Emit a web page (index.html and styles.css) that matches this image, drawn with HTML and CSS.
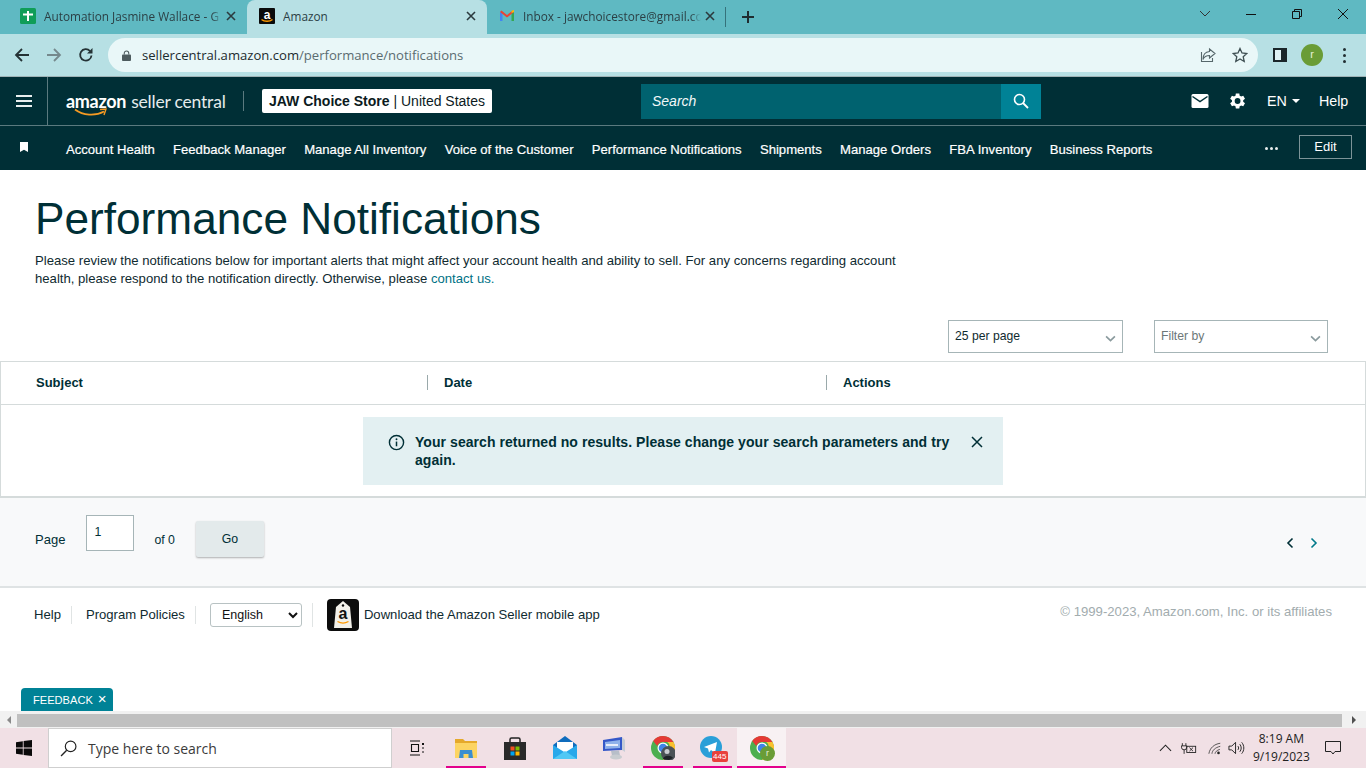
FILE: index.html
```html
<!DOCTYPE html>
<html lang="en">
<head>
  <meta charset="UTF-8" />
  <title>Amazon</title>
  <link rel="stylesheet" href="styles.css">
</head>
<body>
  <div class="tabstrip">
    <div class="tab">
      <svg class="favicon" viewBox="0 0 16 16"><rect width="16" height="16" rx="1.5" fill="#0f9d58"/><path d="M3 6.500h10M8 3v10" stroke="#fff" stroke-width="2" fill="none"/></svg>
      <span class="tab-title">Automation Jasmine Wallace - G</span>
      <svg class="tab-close" viewBox="0 0 10 10"><path d="M1 1l8 8M9 1l-8 8" stroke="#2b3a3e" stroke-width="1.6"/></svg>
    </div>
    <div class="tab tab-active">
      <svg class="favicon" viewBox="0 0 16 16"><rect width="16" height="16" rx="1" fill="#0b0b0b"/><text x="8" y="10.5" text-anchor="middle" font-family="Liberation Sans" font-weight="700" font-size="12" fill="#fff">a</text><path d="M2.5 11.5c3 2.4 8 2.4 11 0" stroke="#f90" stroke-width="1.5" fill="none"/></svg>
      <span class="tab-title">Amazon</span>
      <svg class="tab-close" viewBox="0 0 10 10"><path d="M1 1l8 8M9 1l-8 8" stroke="#2b3a3e" stroke-width="1.6"/></svg>
    </div>
    <div class="tab tab-last">
      <svg class="favicon" viewBox="0 0 16 16"><path d="M1 13V4l2.5 1v8z" fill="#4285f4"/><path d="M15 13V4l-2.5 1v8z" fill="#34a853"/><path d="M1 4l1.5-1.5L8 7l5.5-4.500L15 4 8 9.500z" fill="#ea4335"/><path d="M12.500 5V2.800L15 2v2z" fill="#fbbc04"/></svg>
      <span class="tab-title">Inbox - jawchoicestore@gmail.co</span>
      <svg class="tab-close" viewBox="0 0 10 10"><path d="M1 1l8 8M9 1l-8 8" stroke="#2b3a3e" stroke-width="1.6"/></svg>
    </div>
    <svg class="new-tab" viewBox="0 0 14 14"><path d="M7 1v12M1 7h12" stroke="#1f2d30" stroke-width="2"/></svg>
    <div class="window-controls">
      <svg viewBox="0 0 46 20"><path d="M18 7l5 5 5-5" stroke="#333" fill="none"/></svg>
      <svg viewBox="0 0 46 20"><path d="M18 10.500h10" stroke="#111"/></svg>
      <svg viewBox="0 0 46 20"><path d="M18.500 7.500h7v7h-7zM20.500 7.500v-2h7v7h-2" stroke="#111" fill="none"/></svg>
      <svg viewBox="0 0 46 20"><path d="M18 5l10 10M28 5L18 15" stroke="#111" fill="none"/></svg>
    </div>
  </div>

  <div class="toolbar">
    <svg class="tool" viewBox="0 0 16 16"><path d="M15 8H2M8 2L2 8l6 6" stroke="#243235" stroke-width="1.800" fill="none"/></svg>
    <svg class="tool" viewBox="0 0 16 16"><path d="M1 8h13M8 2l6 6-6 6" stroke="#75898d" stroke-width="1.800" fill="none"/></svg>
    <svg class="tool" viewBox="0 0 16 16"><path d="M13.500 8.500A5.700 5.700 0 1 1 12 4" stroke="#243235" stroke-width="1.800" fill="none"/><path d="M14.500 1v5.500H9z" fill="#243235"/></svg>
    <div class="omnibox">
      <svg class="lock" viewBox="0 0 10 12"><path d="M2.500 5V3.500a2.500 2.500 0 0 1 5 0V5" stroke="#4d5b5e" stroke-width="1.200" fill="none"/><rect y="5" width="10" height="7" rx="1" fill="#4d5b5e"/></svg>
      <span class="url"><span class="url-host">sellercentral.amazon.com</span>/performance/notifications</span>
      <svg class="omni-icon" viewBox="0 0 16 16"><path d="M9.500 2l5.500 4.500-5.500 4.500V8.500C6 8.500 4 10 3 12.500 3 8 5.500 4.800 9.500 4.500z" fill="none" stroke="#56676b" stroke-width="1.100"/><path d="M1.500 5v9.500h11V11" fill="none" stroke="#56676b" stroke-width="1.100"/></svg>
      <svg class="omni-icon" viewBox="0 0 16 16"><path d="M8 1.500l2 4.500 4.800.500-3.600 3.200 1 4.800L8 12l-4.200 2.500 1-4.800L1.200 6.500 6 6z" fill="none" stroke="#3f4f53" stroke-width="1.300"/></svg>
    </div>
    <svg class="side-panel" viewBox="0 0 14 14"><path d="M0 0h14v14H0z" fill="#1a2629"/><path d="M2 2h6v10H2z" fill="#dff2f4"/></svg>
    <div class="avatar">r</div>
    <div class="kebab"><i></i><i></i><i></i></div>
  </div>

  <header class="topbar">
    <button class="burger"><i></i><i></i><i></i></button>
    <a class="logo">
      <span class="logo-word">amazon</span>
      <span class="logo-sub">seller central</span>
      <svg class="logo-smile" viewBox="0 0 34 9"><path d="M1 1.500c8 6 20 7 29 2" stroke="#f59a23" stroke-width="1.800" fill="none"/><path d="M26 1.500l6-.5-2 6" stroke="#f59a23" stroke-width="1.400" fill="none"/></svg>
    </a>
    <div class="store"><b>JAW Choice Store</b> | United States</div>
    <div class="search">
      <span class="search-text">Search</span>
      <div class="search-btn"><svg viewBox="0 0 16 16"><circle cx="6.500" cy="6.500" r="5" stroke="#fff" stroke-width="1.600" fill="none"/><path d="M10 10l5 5" stroke="#fff" stroke-width="1.800"/></svg></div>
    </div>
    <div class="top-right">
      <svg class="mail" viewBox="0 0 17 14"><rect width="17" height="14" rx="1.500" fill="#fff"/><path d="M1 2.500l7.500 5 7.500-5" stroke="#002f36" stroke-width="1.500" fill="none"/></svg>
      <svg class="gear" viewBox="0 0 24 24"><path fill="#fff" fill-rule="evenodd" d="M19.400 13a7.500 7.500 0 0 0 0-2l2.200-1.700-2.100-3.600-2.600 1a7.500 7.500 0 0 0-1.700-1L14.800 2.900h-4.200L10.200 5.700a7.500 7.500 0 0 0-1.700 1l-2.600-1-2.100 3.600L6 11a7.500 7.500 0 0 0 0 2l-2.200 1.700 2.100 3.600 2.600-1a7.500 7.500 0 0 0 1.700 1l.4 2.800h4.200l.4-2.800a7.500 7.500 0 0 0 1.700-1l2.600 1 2.100-3.600zM12.700 15.500a3.500 3.500 0 1 1 0-7 3.500 3.500 0 0 1 0 7z"/></svg>
      <span class="lang">EN<i class="caret"></i></span>
      <span class="help">Help</span>
    </div>
  </header>

  <nav class="navbar">
    <svg class="bookmark" viewBox="0 0 8 10"><path d="M0 0h8v10L4 7.800 0 10z" fill="#fff"/></svg>
    <ul class="nav-links">
      <li>Account Health</li>
      <li>Feedback Manager</li>
      <li>Manage All Inventory</li>
      <li>Voice of the Customer</li>
      <li>Performance Notifications</li>
      <li>Shipments</li>
      <li>Manage Orders</li>
      <li>FBA Inventory</li>
      <li>Business Reports</li>
    </ul>
    <div class="more"><i></i><i></i><i></i></div>
    <button class="edit">Edit</button>
  </nav>

  <main class="page">
    <section class="intro">
      <h1>Performance Notifications</h1>
      <p>Please review the notifications below for important alerts that might affect your account health and ability to sell. For any concerns regarding account health, please respond to the notification directly. Otherwise, please <a>contact us.</a></p>
    </section>

    <div class="filters">
      <div class="fake-select">25 per page<svg viewBox="0 0 10 6"><path d="M1 1l4 4 4-4" stroke="#8a9a9d" stroke-width="1.500" fill="none"/></svg></div>
      <div class="fake-select placeholder">Filter by<svg viewBox="0 0 10 6"><path d="M1 1l4 4 4-4" stroke="#8a9a9d" stroke-width="1.500" fill="none"/></svg></div>
    </div>

    <section class="results">
      <div class="results-head">
        <div class="col col-subject">Subject</div>
        <div class="col col-date">Date</div>
        <div class="col col-actions">Actions</div>
      </div>
      <div class="results-body">
        <div class="alert">
          <svg class="alert-icon" viewBox="0 0 18 18"><circle cx="9" cy="9" r="7.500" stroke="#002f36" stroke-width="1.500" fill="none"/><path d="M9 8v5" stroke="#002f36" stroke-width="1.600"/><circle cx="9" cy="5.500" r="1" fill="#002f36"/></svg>
          <span class="alert-text">Your search returned no results. Please change your search parameters and try again.</span>
          <svg class="alert-close" viewBox="0 0 12 12"><path d="M1 1l10 10M11 1L1 11" stroke="#002f36" stroke-width="1.500"/></svg>
        </div>
      </div>
    </section>

    <section class="pager">
      <span class="pager-label">Page</span>
      <div class="pager-input">1</div>
      <span class="pager-of">of 0</span>
      <button class="pager-go">Go</button>
      <div class="pager-arrows">
        <svg viewBox="0 0 8 12"><path d="M6.500 1.500L2 6l4.500 4.500" stroke="#002f36" stroke-width="1.600" fill="none"/></svg>
        <svg viewBox="0 0 8 12"><path d="M1.500 1.500L6 6l-4.500 4.500" stroke="#00798a" stroke-width="1.600" fill="none"/></svg>
      </div>
    </section>

    <footer class="site-footer">
      <a class="foot-link foot-help">Help</a>
      <a class="foot-link foot-policies">Program Policies</a>
      <div class="foot-lang">
        <select class="lang-select"><option>English</option></select>
      </div>
      <svg class="app-icon" viewBox="0 0 32 32"><rect width="32" height="32" rx="4" fill="#0c0c0c"/><path d="M9 8l7-6 7 6 2 21H7z" fill="#f3f1ea"/><circle cx="16" cy="6.500" r="1.200" fill="#0c0c0c"/><text x="16" y="20" text-anchor="middle" font-family="Liberation Sans" font-weight="700" font-size="16" fill="#111">a</text><path d="M10.500 22.500c3.500 2 7.500 2 11 0" stroke="#f90" stroke-width="1.300" fill="none"/></svg>
      <a class="foot-app">Download the Amazon Seller mobile app</a>
      <span class="copyright">© 1999-2023, Amazon.com, Inc. or its affiliates</span>
    </footer>

    <div class="feedback">FEEDBACK<span class="feedback-x">×</span></div>
  </main>

  <div class="hscroll">
    <i class="arrow-left"></i>
    <div class="hscroll-thumb"></div>
    <i class="arrow-right"></i>
  </div>

  <div class="taskbar">
    <div class="start"><svg viewBox="0 0 16 16"><path d="M0 2.200l6.800-1v6.400H0zM7.600 1.100L16 0v7.600H7.600zM0 8.400h6.800v6.400L0 13.800zM7.600 8.400H16V16l-8.400-1.100z" fill="#0a0a0a"/></svg></div>
    <div class="task-search">
      <svg viewBox="0 0 16 16"><circle cx="10" cy="6" r="5" stroke="#222" stroke-width="1.100" fill="none"/><path d="M6.300 9.700L1 15" stroke="#222" stroke-width="1.300"/></svg>
      <span>Type here to search</span>
    </div>
    <div class="task-item">
      <svg viewBox="0 0 16 16" class="task-small"><path d="M1 1h10M1 15h10M2.500 4.500h7v7h-7z" stroke="#111" stroke-width="1.100" fill="none"/><path d="M13 3h2v2h-2z" fill="#111"/><path d="M13 8h2M13 12h2" stroke="#111"/></svg>
    </div>
    <div class="task-item running">
      <svg viewBox="0 0 24 24"><path d="M1 3h8l2 2h12v4H1z" fill="#e5a92b"/><path d="M1 7h22v15H1z" fill="#fcd462"/><path d="M6 14h12l1 8H5z" fill="#3b8ed0"/><path d="M9.500 18h5v4h-5z" fill="#fcd462"/></svg>
    </div>
    <div class="task-item">
      <svg viewBox="0 0 24 24"><path d="M7 7V3.500A1.500 1.500 0 0 1 8.500 2h7A1.500 1.500 0 0 1 17 3.500V7" stroke="#222" stroke-width="1.500" fill="none"/><path d="M1 6h22v18H1z" fill="#2a2a2a"/><path d="M7.500 10.500h4v4h-4z" fill="#f25022"/><path d="M12.500 10.500h4v4h-4z" fill="#7fba00"/><path d="M7.500 15.500h4v4h-4z" fill="#00a4ef"/><path d="M12.500 15.500h4v4h-4z" fill="#ffb900"/></svg>
    </div>
    <div class="task-item">
      <svg viewBox="0 0 24 24"><path d="M0 9L12 0l12 9v14H0z" fill="#0f6cbd"/><path d="M4 6h16v7l-8 5-8-5z" fill="#fff"/><path d="M0 9l12 7.500L24 9v14H0z" fill="#28a8ea"/><path d="M0 23l12-8 12 8z" fill="#50c8f5"/></svg>
    </div>
    <div class="task-item">
      <svg viewBox="0 0 24 24"><path d="M1 4l19-3v13L1 15z" fill="#3558c8"/><path d="M3 6l15-2v8L3 13z" fill="#8fb2ea"/><path d="M4 8h12v2H4z" fill="#e8eefb"/><path d="M20 1l3 3v12l-3-2z" fill="#c6ccd6"/><path d="M9 15l8-.5 1 5H10z" fill="#b7bec8"/><ellipse cx="14" cy="21" rx="6" ry="2.500" fill="#c8ccd0"/></svg>
    </div>
    <div class="task-item running">
      <svg viewBox="0 0 24 24"><circle cx="12" cy="12" r="12" fill="#4caf50"/><path d="M12 0a12 12 0 0 1 10.400 6H12a6 6 0 0 0-5.700 4L2.200 5A12 12 0 0 1 12 0z" fill="#e53935"/><path d="M22.400 6A12 12 0 0 1 12 24l5.200-9a6 6 0 0 0-1-9z" fill="#fbc02d"/><circle cx="12" cy="12" r="5.500" fill="#fff"/><circle cx="12" cy="12" r="4.300" fill="#3f83e8"/><circle cx="17.500" cy="17.500" r="7.500" fill="#4b5256"/><circle cx="16" cy="15.500" r="2.500" fill="#c9ccd0"/><path d="M12 23c1-4 8-4 10-1l-4 2z" fill="#1d2226"/></svg>
    </div>
    <div class="task-item running">
      <svg viewBox="0 0 24 24"><circle cx="11" cy="11" r="11" fill="#2a9fd8"/><path d="M4 11l13-5-2 11-4-3-2 2.500-1-4z" fill="#fff"/></svg>
      <span class="tg-badge">445</span>
    </div>
    <div class="task-item running active">
      <svg viewBox="0 0 24 24"><circle cx="12" cy="12" r="12" fill="#4caf50"/><path d="M12 0a12 12 0 0 1 10.400 6H12a6 6 0 0 0-5.700 4L2.200 5A12 12 0 0 1 12 0z" fill="#e53935"/><path d="M22.400 6A12 12 0 0 1 12 24l5.200-9a6 6 0 0 0-1-9z" fill="#fbc02d"/><circle cx="12" cy="12" r="5.500" fill="#fff"/><circle cx="12" cy="12" r="4.300" fill="#3f83e8"/></svg>
      <span class="chrome-badge">r</span>
    </div>
    <div class="tray">
      <svg class="tray-caret" viewBox="0 0 14 8"><path d="M1 7l6-6 6 6" stroke="#222" stroke-width="1.100" fill="none"/></svg>
      <svg class="tray-battery" viewBox="0 0 18 14"><path d="M1.500 1v3M5.500 1v3M0.500 4h6v1.500a3 3 0 0 1-6 0zM3.500 8.500V13" stroke="#222" fill="none"/><rect x="6.500" y="4.500" width="10" height="7" stroke="#222" fill="none"/><path d="M9.500 6l4 4M13.500 6l-4 4" stroke="#222"/></svg>
      <svg class="tray-wifi" viewBox="0 0 16 14"><path d="M1 13C2 6.500 7 2 14 1M4.500 13C5 9 8 6 14 4.500M8 13c.3-2 2-4 5.500-5" stroke="#444" fill="none"/><circle cx="12" cy="12" r="1.500" fill="#222"/></svg>
      <svg class="tray-sound" viewBox="0 0 18 14"><path d="M1 5h3l4-4v12l-4-4H1z" stroke="#222" fill="none"/><path d="M10.500 5c1 1.200 1 2.800 0 4M12.500 3c2 2.400 2 5.600 0 8M14.500 1c3 3.500 3 8.500 0 12" stroke="#222" fill="none"/></svg>
      <div class="clock"><span>8:19 AM</span><span>9/19/2023</span></div>
      <svg class="tray-notify" viewBox="0 0 16 14"><path d="M.5.500h15v10h-5.500L8 13 6 10.500H.5z" stroke="#222" fill="none"/></svg>
    </div>
  </div>
</body>
</html>
```

FILE: styles.css
```css
* {
  margin: 0;
  padding: 0;
  box-sizing: border-box;
}

html, body {
  width: 1366px;
  height: 768px;
  overflow: hidden;
}

body {
  font-family: 'Liberation Sans', Arial, sans-serif;
  background: #ffffff;
  color: #002f36;
  display: flex;
  flex-direction: column;
}

/* browser tabs */
.tabstrip {
  height: 34px;
  flex: none;
  background: #5fb9c2;
  display: flex;
  align-items: stretch;
  font-family: 'Open Sans', 'Noto Sans', sans-serif;
}

.tab {
  width: 240px;
  padding: 0 11px 2px 20px;
  display: flex;
  align-items: center;
  gap: 8px;
  font-size: 11.800px;
  color: #2b3f44;
}

.tab:first-child {
  width: 247px;
}

.tab-active {
  background: #b7e0e4;
  border-radius: 8px 8px 0 0;
  padding-left: 12px;
}

.tab-last {
  width: 239px;
  padding-left: 12px;
  position: relative;
}

.tab-last::after {
  content: '';
  position: absolute;
  right: 0;
  top: 7px;
  height: 20px;
  border-right: 1px solid #35727b;
}

.favicon {
  width: 16px;
  height: 16px;
  flex: none;
}

.tab-title {
  flex: 1;
  white-space: nowrap;
  overflow: hidden;
  -webkit-mask-image: linear-gradient(to left, transparent 0, #000 10px);
  mask-image: linear-gradient(to left, transparent 0, #000 10px);
}

.tab-active .tab-title {
  -webkit-mask-image: none;
  mask-image: none;
}

.tab-close {
  width: 10px;
  height: 10px;
  flex: none;
  margin-left: -4px;
}

.new-tab {
  width: 14px;
  height: 14px;
  margin: 10px 0 0 15px;
}

.window-controls {
  margin-left: auto;
  display: flex;
  padding: 4px 0 0 0;
}

.window-controls svg {
  width: 46px;
  height: 20px;
}

/* browser toolbar */
.toolbar {
  height: 43px;
  flex: none;
  background: #b7e0e4;
  border-bottom: 1px solid #9fb3b6;
  display: flex;
  align-items: center;
  padding: 0 0 0 14px;
}

.tool {
  width: 16px;
  height: 16px;
  margin-right: 16px;
  flex: none;
}

.tool:nth-child(3) {
  margin-right: 14px;
}

.omnibox {
  width: 1150px;
  height: 34px;
  border-radius: 17px;
  background: #e9f7f8;
  display: flex;
  align-items: center;
  padding: 0 10px 0 14px;
  font-family: 'Open Sans', 'Noto Sans', sans-serif;
  font-size: 13.100px;
  color: #5a6c70;
}

.lock {
  width: 9px;
  height: 11px;
  margin-right: 11px;
}

.url {
  flex: 1;
}

.url-host {
  color: #1c2b2e;
}

.omni-icon {
  width: 16px;
  height: 16px;
  margin-left: 16px;
}

.side-panel {
  width: 14px;
  height: 14px;
  margin-left: 15px;
}

.avatar {
  width: 22px;
  height: 22px;
  margin-left: 14px;
  border-radius: 50%;
  background: #6a9c36;
  color: #e6f0d8;
  font-size: 11px;
  text-align: center;
  line-height: 21px;
}

.kebab {
  margin-left: 20px;
  display: flex;
  flex-direction: column;
  gap: 3px;
}

.kebab i {
  width: 3px;
  height: 3px;
  border-radius: 50%;
  background: #222f32;
}

/* seller central header */
.topbar {
  height: 49px;
  flex: none;
  background: #002f36;
  border-bottom: 1px solid #5b7a7f;
  display: flex;
  align-items: center;
  color: #ffffff;
}

.burger {
  width: 48px;
  height: 48px;
  background: none;
  border: 0;
  border-right: 1px solid #5b7a7f;
  display: flex;
  flex-direction: column;
  gap: 3px;
  align-items: center;
  justify-content: center;
}

.burger i {
  width: 16px;
  height: 2px;
  background: #e8eeee;
}

.logo {
  position: relative;
  width: 178px;
  height: 20px;
  margin-left: 18px;
  border-right: 1px solid #5b7a7f;
  display: flex;
  align-items: baseline;
  gap: 5px;
  white-space: nowrap;
  line-height: 20px;
}

.logo-word {
  font-family: 'Lato', sans-serif;
  font-weight: 700;
  font-size: 18px;
  letter-spacing: -0.300px;
}

.logo-sub {
  font-family: 'Lato', sans-serif;
  font-size: 17.500px;
  letter-spacing: -0.200px;
  color: #e6ecec;
}

.logo-smile {
  position: absolute;
  left: 8px;
  top: 17px;
  width: 34px;
  height: 9px;
}

.store {
  width: 230px;
  height: 24px;
  margin-left: 18px;
  background: #ffffff;
  border-radius: 2px;
  color: #0b1a1d;
  font-size: 14px;
  line-height: 24px;
  text-align: center;
  white-space: nowrap;
}

.search {
  width: 400px;
  height: 35px;
  margin-left: 149px;
  background: #00626f;
  display: flex;
  align-items: center;
  padding-left: 11px;
}

.search-text {
  flex: 1;
  font-style: italic;
  font-size: 14px;
  color: #f2f8f8;
}

.search-btn {
  width: 40px;
  height: 35px;
  background: #008296;
  display: flex;
  align-items: center;
  justify-content: center;
}

.search-btn svg {
  width: 16px;
  height: 16px;
}

.top-right {
  flex: 1;
  display: flex;
  align-items: center;
  padding-left: 150px;
  font-size: 14.300px;
}

.mail {
  width: 18px;
  height: 14px;
  flex: none;
}

.gear {
  width: 20px;
  height: 20px;
  flex: none;
  margin-left: 18px;
}

.lang {
  margin-left: 20px;
  display: flex;
  align-items: center;
  gap: 5px;
}

.caret {
  border: 4.500px solid transparent;
  border-top: 4.500px solid #fff;
  border-bottom: 0;
}

.help {
  margin-left: 19px;
}

/* pinned nav */
.navbar {
  height: 44px;
  flex: none;
  background: #002f36;
  display: flex;
  align-items: center;
  color: #ffffff;
  font-size: 13.100px;
}

.bookmark {
  width: 8px;
  height: 10px;
  margin: 0 0 3px 20px;
  flex: none;
}

.nav-links {
  list-style: none;
  display: flex;
  gap: 18.250px;
  margin: 2px 0 0 38px;
  white-space: nowrap;
  -webkit-text-stroke: 0.200px #ffffff;
}

.more {
  margin-left: auto;
  display: flex;
  gap: 2px;
}

.more i {
  width: 3px;
  height: 3px;
  background: #e8eeee;
  border-radius: 50%;
}

.edit {
  width: 53px;
  height: 24px;
  margin: 0 14px 2px 21px;
  padding-bottom: 2px;
  background: none;
  border: 1px solid #7c9498;
  color: #ffffff;
  font: 13px 'Liberation Sans', Arial, sans-serif;
}

/* main content */
.page {
  flex: 1;
  min-height: 0;
  position: relative;
}

.intro {
  padding: 22px 0 0 35px;
}

h1 {
  font-size: 44.200px;
  font-weight: 400;
  line-height: 54px;
  color: #002f36;
  margin-bottom: 6px;
}

.intro p {
  width: 870px;
  font-size: 13.140px;
  line-height: 18px;
  color: #0f2a30;
}

.intro a {
  color: #007185;
}

.filters {
  display: flex;
  justify-content: flex-end;
  gap: 31px;
  padding-right: 38px;
  margin-top: 32px;
}

.fake-select {
  width: 175px;
  height: 33px;
  border: 1px solid #a6b5b7;
  padding: 0 6px;
  font-size: 12.200px;
  line-height: 30px;
  color: #0f2a30;
  position: relative;
}

.fake-select + .fake-select {
  width: 174px;
}

.placeholder {
  color: #6c7778;
}

.fake-select svg {
  position: absolute;
  right: 6px;
  top: 14px;
  width: 11px;
  height: 7px;
}

.results {
  margin-top: 8px;
  border: 1px solid #d5dbdb;
  border-bottom: 2px solid #d5dbdb;
  height: 137px;
}

.results-head {
  height: 43px;
  border-bottom: 1px solid #d5dbdb;
  display: flex;
  align-items: center;
  padding-bottom: 2px;
  font-size: 13px;
  font-weight: 700;
}

.col {
  height: 15px;
  line-height: 15px;
  padding-left: 16px;
}

.col-subject {
  width: 426px;
  padding-left: 35px;
}

.col-date {
  width: 399px;
  border-left: 1px solid #9aa9ab;
}

.col-actions {
  border-left: 1px solid #9aa9ab;
}

.results-body {
  display: flex;
  justify-content: center;
  padding-top: 12px;
}

.alert {
  width: 640px;
  height: 68px;
  background: #e3f0f2;
  display: flex;
  align-items: flex-start;
  padding: 16px 20px 0 25px;
}

.alert-icon {
  width: 17px;
  height: 17px;
  margin-top: 1px;
  flex: none;
}

.alert-text {
  flex: 1;
  margin: 0 13px 0 10px;
  font-size: 14px;
  font-weight: 700;
  line-height: 18px;
  letter-spacing: 0.060px;
}

.alert-close {
  width: 12px;
  height: 12px;
  margin-top: 3px;
  flex: none;
}

.pager {
  height: 90px;
  background: #f8f9fa;
  border-bottom: 2px solid #dfe3e4;
  display: flex;
  align-items: flex-start;
  padding: 17px 0 0 35px;
  font-size: 12.300px;
}

.pager-label {
  margin-top: 17px;
  font-size: 13px;
}

.pager-input {
  width: 48px;
  height: 36px;
  margin-left: 21px;
  background: #fff;
  border: 1px solid #a6b5b7;
  padding: 9px 0 0 7px;
}

.pager-of {
  margin: 18px 0 0 20px;
}

.pager-go {
  width: 68px;
  height: 36px;
  margin: 6px 0 0 21px;
  background: #e3eaeb;
  border: 0;
  border-radius: 2px;
  box-shadow: 0 1px 2px rgba(0, 0, 0, 0.3);
  color: #002f36;
  font: 12.300px 'Liberation Sans', Arial, sans-serif;
}

.pager-arrows {
  margin: 22px 48px 0 auto;
  display: flex;
  gap: 16px;
}

.pager-arrows svg {
  width: 8px;
  height: 12px;
}

.site-footer {
  display: flex;
  align-items: center;
  height: 54px;
  padding-left: 34px;
  font-size: 13.100px;
  color: #0f2a30;
}

.foot-link {
  padding-right: 10px;
  border-right: 1px solid #e0e4e4;
  line-height: 18px;
}

.foot-policies {
  margin-left: 14px;
}

.foot-lang {
  margin-left: 14px;
  padding-right: 10px;
  border-right: 1px solid #e0e4e4;
}

.lang-select {
  width: 92px;
  height: 24px;
  display: block;
  padding-left: 7px;
  background: #fff;
  border: 1px solid #b8c2c3;
  border-radius: 3px;
  color: #111;
  font: 12.500px 'Liberation Sans', Arial, sans-serif;
}

.app-icon {
  width: 32px;
  height: 32px;
  margin-left: 14px;
}

.foot-app {
  margin: -2px 0 0 5px;
}

.copyright {
  margin: -8px 34px 0 auto;
  color: #a2acae;
  font-size: 13.150px;
}

.feedback {
  position: absolute;
  left: 21px;
  bottom: 0;
  width: 92px;
  height: 23px;
  background: #008296;
  border-radius: 4px 4px 0 0;
  color: #fff;
  font-size: 11.100px;
  line-height: 24px;
  padding-left: 12px;
  white-space: nowrap;
}

.feedback-x {
  margin-left: 5px;
  font-size: 15px;
  line-height: 20px;
}

/* window scrollbar */
.hscroll {
  height: 17px;
  flex: none;
  background: #f1f1f1;
  display: flex;
  align-items: center;
  padding: 1px 0 0;
}

.arrow-left {
  width: 17px;
  display: flex;
  justify-content: center;
}

.arrow-left::before {
  content: '';
  border: 4px solid transparent;
  border-right: 4px solid #8a8a8a;
  border-left: 0;
}

.hscroll-thumb {
  width: 1325px;
  height: 13px;
  background: #c0c0c0;
}

.arrow-right {
  flex: 1;
  display: flex;
  justify-content: center;
}

.arrow-right::before {
  content: '';
  border: 4px solid transparent;
  border-left: 4px solid #505050;
  border-right: 0;
}

/* windows taskbar */
.taskbar {
  height: 40px;
  flex: none;
  background: #f1e0e5;
  display: flex;
  align-items: stretch;
}

.start {
  width: 48px;
  display: flex;
  align-items: center;
  justify-content: center;
}

.start svg {
  width: 16px;
  height: 16px;
}

.task-search {
  width: 344px;
  background: #fff;
  border: 1px solid #cfcfcf;
  display: flex;
  align-items: center;
  padding-left: 11px;
  font-family: 'Open Sans', 'Noto Sans', sans-serif;
  font-size: 14px;
  color: #3b3b3b;
}

.task-search svg {
  width: 17px;
  height: 17px;
  margin-right: 11px;
}

.task-item {
  width: 49.300px;
  position: relative;
  display: flex;
  align-items: center;
  justify-content: center;
}

.task-item svg {
  width: 24px;
  height: 24px;
}

.task-item svg.task-small {
  width: 16px;
  height: 16px;
}

.running::after {
  content: '';
  position: absolute;
  left: 5px;
  right: 5px;
  bottom: 0;
  height: 2px;
  background: #e3008c;
}

.active {
  background: #f8f1f3;
}

.active::after {
  left: 0;
  right: 0;
}

.tg-badge {
  position: absolute;
  left: 24px;
  top: 23px;
  width: 16px;
  height: 11px;
  background: #e8413c;
  border-radius: 2px;
  color: #fff;
  font-size: 8px;
  line-height: 11px;
  text-align: center;
}

.chrome-badge {
  position: absolute;
  left: 23px;
  top: 18px;
  width: 15px;
  height: 15px;
  border-radius: 50%;
  background: #6a9c36;
  color: #e6f0d8;
  font-size: 9px;
  line-height: 15px;
  text-align: center;
}

.tray {
  flex: 1;
  display: flex;
  align-items: center;
  padding-left: 373px;
  font-family: 'Open Sans', 'Noto Sans', sans-serif;
  font-size: 12px;
  color: #222;
}

.tray-caret {
  width: 13px;
  height: 8px;
}

.tray-battery {
  width: 16px;
  height: 13px;
  margin-left: 9px;
}

.tray-wifi {
  width: 14px;
  height: 13px;
  margin-left: 11px;
}

.tray-sound {
  width: 17px;
  height: 14px;
  margin-left: 6px;
}

.clock {
  width: 70px;
  margin-left: 1px;
  display: flex;
  flex-direction: column;
  align-items: center;
  line-height: 18px;
}

.tray-notify {
  width: 16px;
  height: 14px;
  margin-left: 9px;
}
```
